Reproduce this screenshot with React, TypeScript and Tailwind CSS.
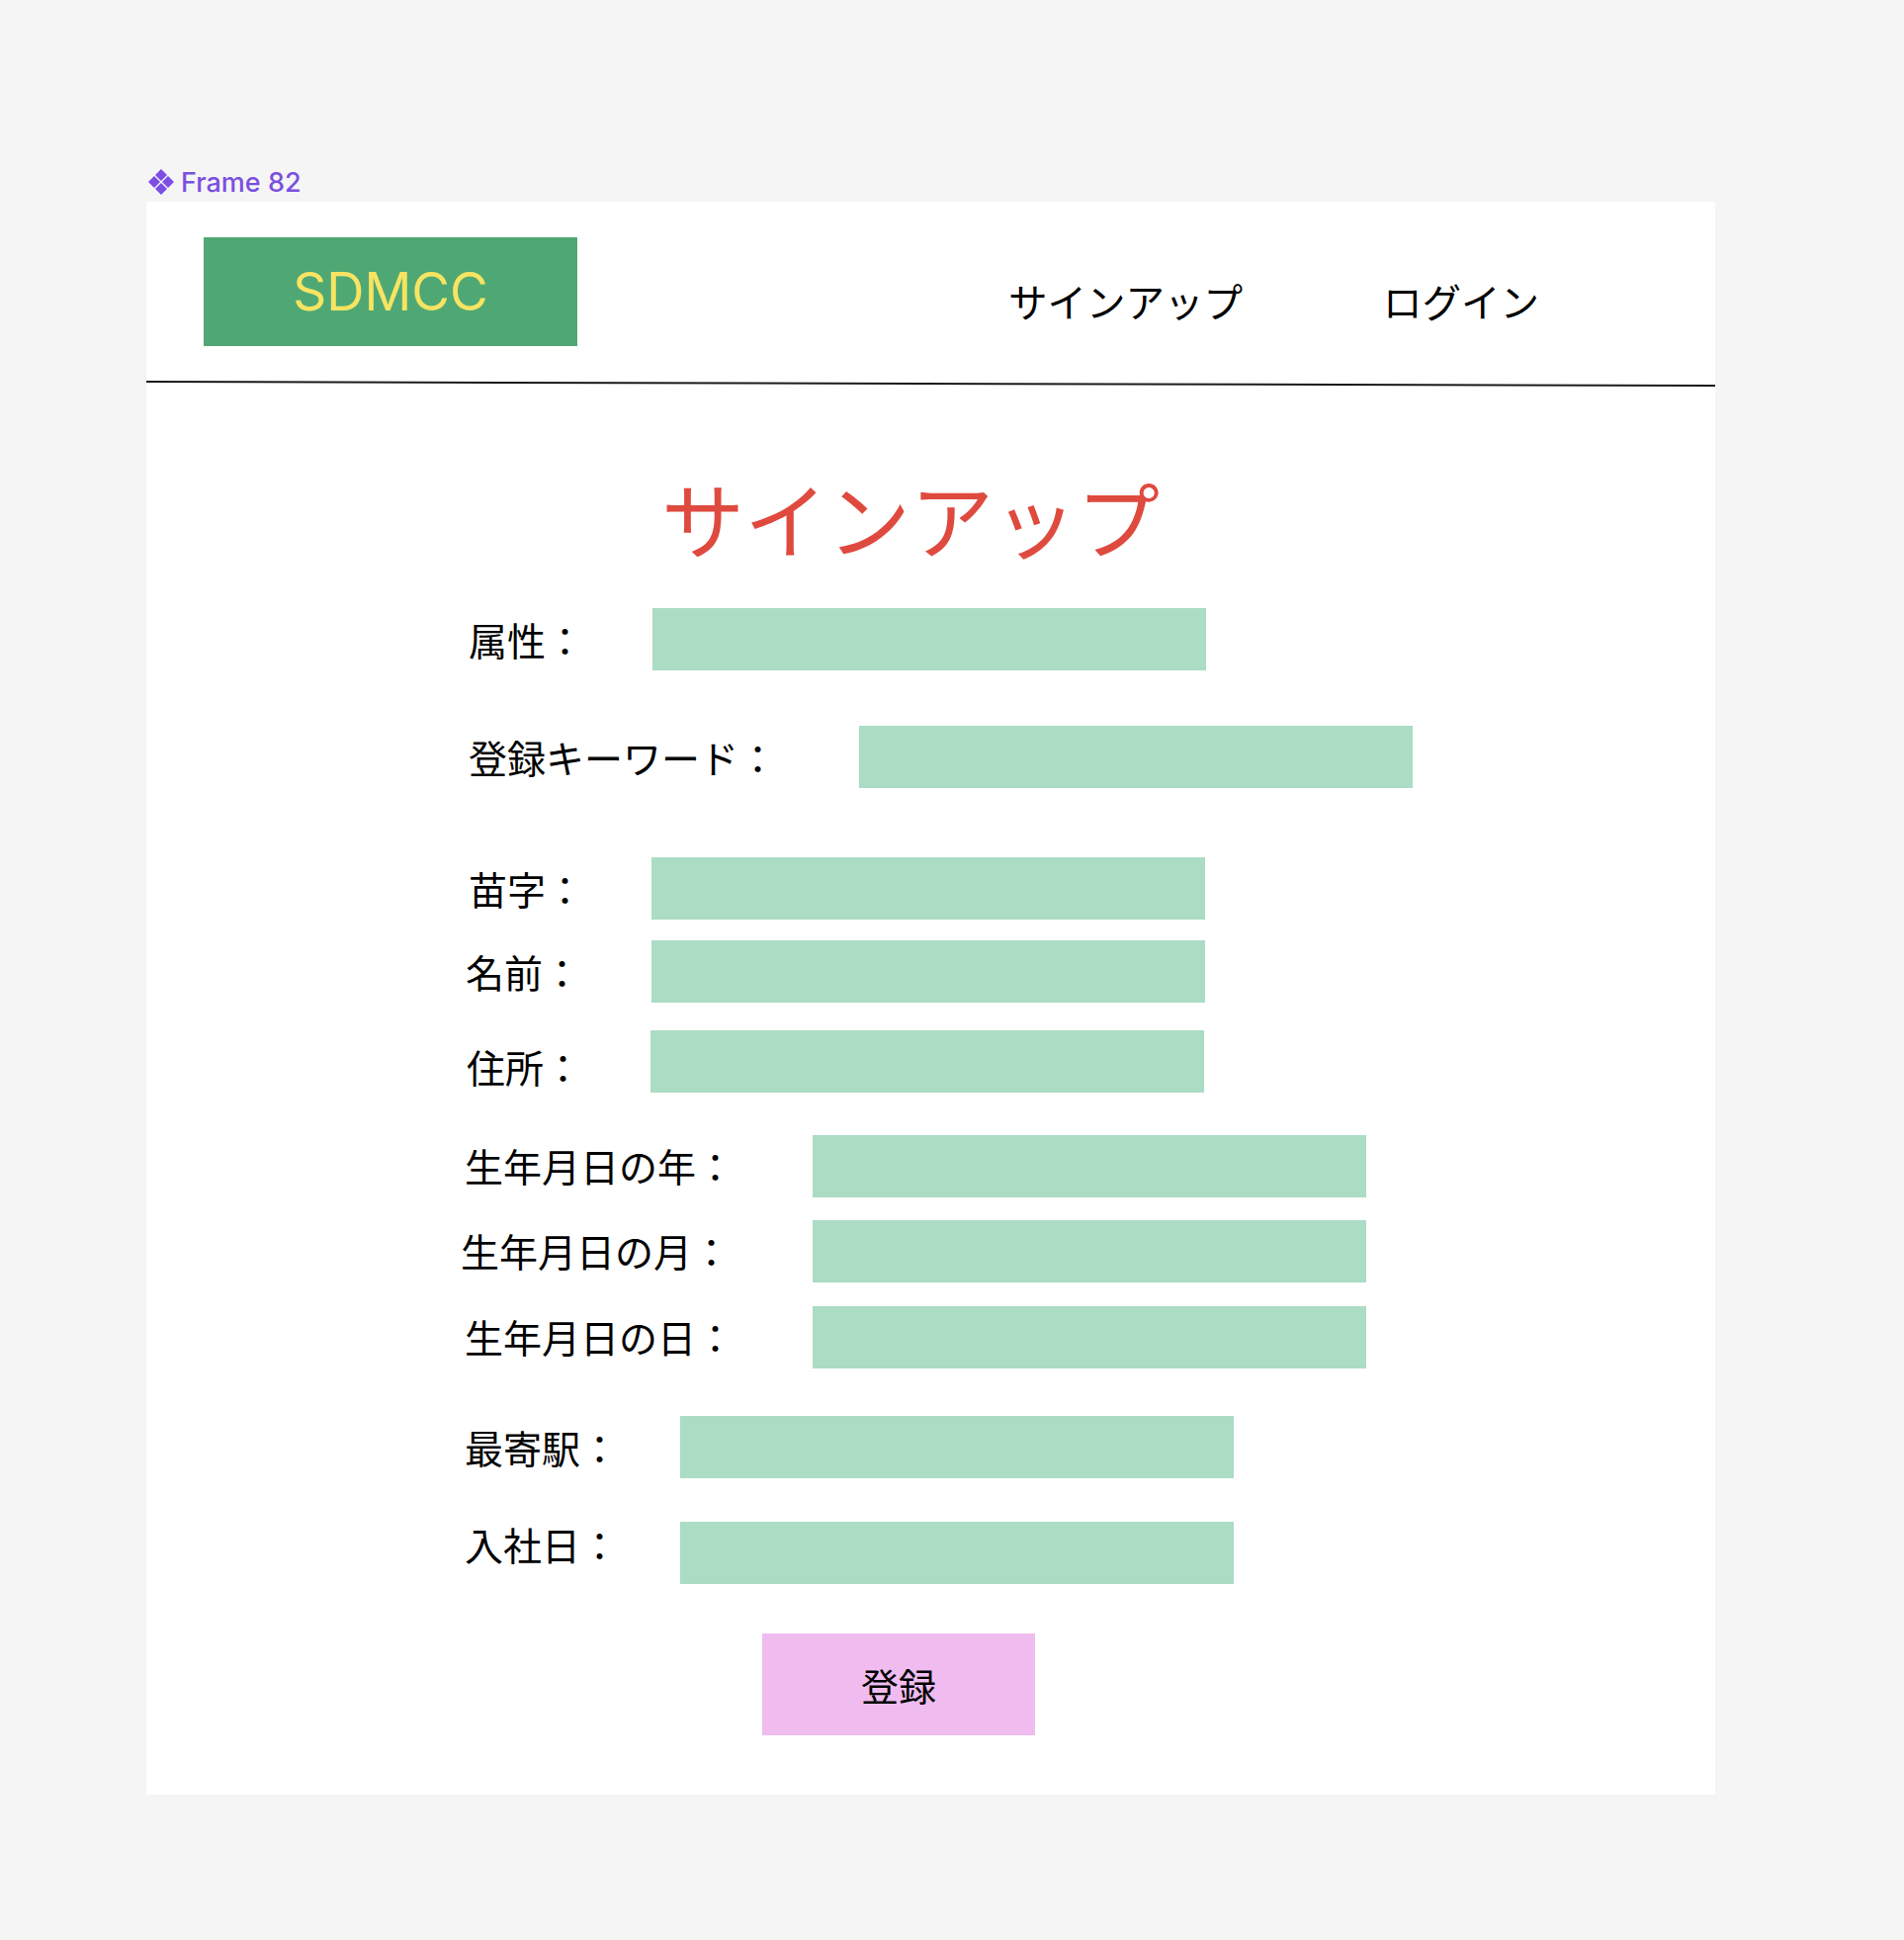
import React from 'react';

const cjk = "font-['Noto_Sans_CJK_JP','Noto_Sans',sans-serif]";

type Row = {
  label: string;
  rowClass: string;
  labelClass: string;
};

// every class is written out so Tailwind can pick it up
const rows: Row[] = [
  { label: '属性：', rowClass: 'mt-[50px] pl-[326px]', labelClass: 'w-[186px]' },
  { label: '登録キーワード：', rowClass: 'mt-[56px] pl-[326px]', labelClass: 'w-[395px]' },
  { label: '苗字：', rowClass: 'mt-[70px] pl-[326px]', labelClass: 'w-[185px]' },
  { label: '名前：', rowClass: 'mt-[21px] pl-[323px]', labelClass: 'w-[188px]' },
  { label: '住所：', rowClass: 'mt-[28px] pl-[324px]', labelClass: 'w-[186px] translate-y-[5px]' },
  { label: '生年月日の年：', rowClass: 'mt-[43px] pl-[322px]', labelClass: 'w-[352px] -translate-y-[1px]' },
  { label: '生年月日の月：', rowClass: 'mt-[23px] pl-[318px]', labelClass: 'w-[356px] -translate-y-[1px]' },
  { label: '生年月日の日：', rowClass: 'mt-[24px] pl-[322px]', labelClass: 'w-[352px] -translate-y-[1px]' },
  { label: '最寄駅：', rowClass: 'mt-[48px] pl-[322px]', labelClass: 'w-[218px]' },
  { label: '入社日：', rowClass: 'mt-[44px] pl-[322px]', labelClass: 'w-[218px] -translate-y-[9px]' },
];

const ComponentIcon = () => (
  <svg width="28" height="28" viewBox="0 0 28 28" className="shrink-0">
    <g fill="#7c4ee4">
      <path d="M14 1 L20 7 L14 13 L8 7 Z" />
      <path d="M7 8 L13 14 L7 20 L1 14 Z" />
      <path d="M21 8 L27 14 L21 20 L15 14 Z" />
      <path d="M14 15 L20 21 L14 27 L8 21 Z" />
    </g>
  </svg>
);

const App = () => {
  return (
    <div className="min-h-[1962px] w-full bg-[#f5f5f5] pt-[170px] pl-[148px]">
      <div className="flex items-center h-[28px] pl-[1px]">
        <ComponentIcon />
        <span className="ml-[6px] font-['Inter',sans-serif] font-medium text-[27px] leading-none text-[#7b4fe0]">
          Frame 82
        </span>
      </div>

      <div className="mt-[6px] w-[1587px] h-[1611px] bg-white">
        <header className="flex items-start pl-[58px] pt-[36px]">
          <div className="w-[378px] h-[110px] bg-[#4fa874] flex items-center justify-center">
            <span className="font-['Inter',sans-serif] text-[53px] leading-none text-[#f7e462]">SDMCC</span>
          </div>
          <nav className={`flex mt-[44px] ml-[436px] text-[39.5px] leading-none text-black ${cjk}`}>
            <span>サインアップ</span>
            <span className="ml-[142px]">ログイン</span>
          </nav>
        </header>

        <div className="mt-[37px] h-[2px] bg-[#1a1a1a] rotate-[0.14deg]" />

        <h1 className={`mt-[92px] pl-[521px] text-[84px] leading-none font-normal text-[#df4a3f] ${cjk}`}>
          サインアップ
        </h1>

        {rows.map(row => (
          <div key={row.label} className={`flex items-center h-[63px] ${row.rowClass}`}>
            <span className={`shrink-0 text-[39px] leading-none text-black ${cjk} ${row.labelClass}`}>
              {row.label}
            </span>
            <div className="w-[560px] h-[63px] bg-[#abdcc4]" />
          </div>
        ))}

        <div className="mt-[50px] pl-[623px]">
          <button
            type="button"
            className={`w-[276px] h-[103px] bg-[#f0bcf0] flex items-center justify-center text-[38px] leading-none text-black ${cjk}`}
          >
            登録
          </button>
        </div>
      </div>
    </div>
  );
};

export default App;
